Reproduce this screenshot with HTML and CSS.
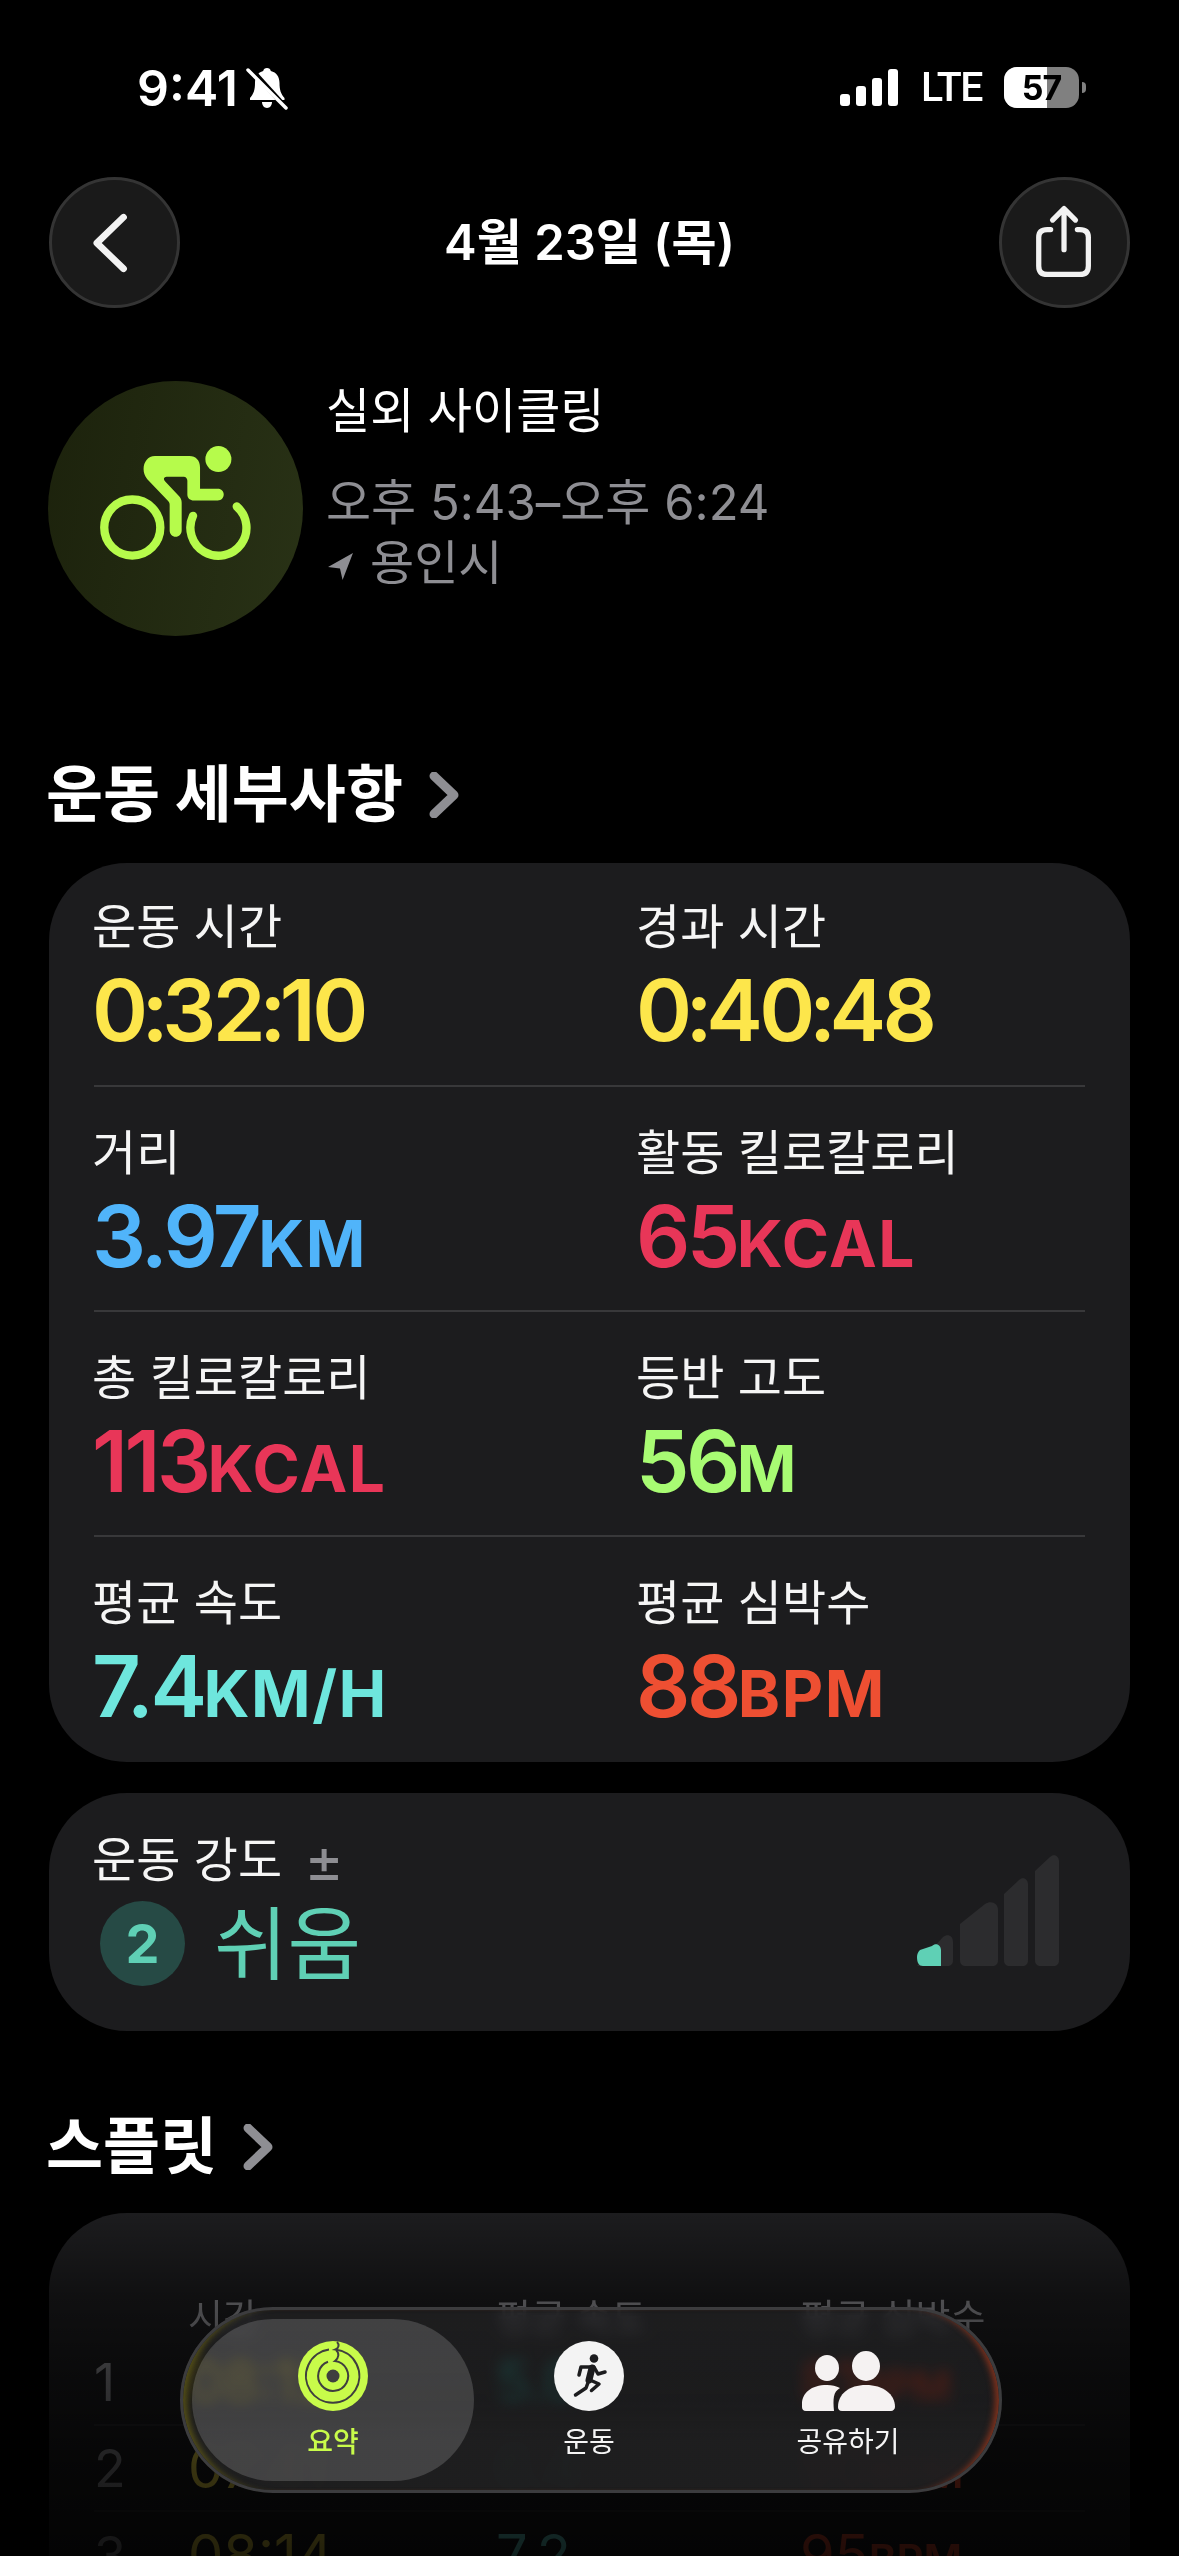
FILE: index.html
```html
<!DOCTYPE html>
<html lang="ko">
<head>
<meta charset="utf-8">
<title>운동 요약</title>
<link rel="stylesheet" href="styles.css">
</head>
<body>
<div class="page">
  <header class="status">
    <div class="status-left">
      <span class="clock">9:41</span>
      <svg class="bell" viewBox="0 0 44 44" aria-hidden="true">
        <path class="bell-shape" d="M21 2c2 0 3.500 1.300 3.800 3.100C30.500 6.500 33.500 11 33.500 17c0 7 1.500 11 5 15v2H4v-2c3.500-4 5-8 5-15 0-6 3-10.500 8.200-11.900C17.500 3.300 19 2 21 2z"/>
        <path class="bell-shape" d="M16 36h10c0 3-2 6-5 6s-5-3-5-6z"/>
        <path class="bell-cut" d="M4 2 42 44"/>
        <path class="bell-slash" d="M2 4 40 42"/>
      </svg>
    </div>
    <div class="status-right">
      <svg class="signal" viewBox="0 0 58 37" aria-hidden="true">
        <rect x="0" y="25" width="10" height="12" rx="3"/>
        <rect x="16" y="17" width="10" height="20" rx="3"/>
        <rect x="32" y="9" width="10" height="28" rx="3"/>
        <rect x="48" y="0" width="10" height="37" rx="3"/>
      </svg>
      <span class="lte">LTE</span>
      <div class="battery"><div class="battery-fill"></div><span class="battery-num">57</span></div>
      <span class="battery-nub"></span>
    </div>
  </header>

  <nav class="nav">
    <button class="round-btn" aria-label="뒤로">
      <svg viewBox="0 0 131 131" aria-hidden="true"><path class="line-icon" d="M75 39 47 66l28 27"/></svg>
    </button>
    <h1 class="date">4월 23일 (목)</h1>
    <button class="round-btn" aria-label="공유">
      <svg viewBox="0 0 131 131" aria-hidden="true">
        <path class="share-icon" d="M51 52H47.500C41 52 38.500 55 38.500 60v30c0 6 3 9 9 9h34c6 0 9-3 9-9V60c0-5-2.500-8-9-8H79"/>
        <path class="share-icon" d="M65 73V32M53 42l12-12 12 12"/>
      </svg>
    </button>
  </nav>

  <section class="workout">
    <div class="bike-badge">
      <svg viewBox="55 33 763 764" aria-hidden="true">
        <circle class="bike-fill" cx="565" cy="267" r="39"/>
        <path class="bike-fill" d="M375 258H478C498 258 510 272 510 292V356H563C574 356 581 364 581 373S574 391 563 391H492C480 391 472 384 472 373V332C472 325 468 320 461 320H410C402 320 399 327 405 333L446 377C452 383 455 390 455 398V481C455 492 447 500 437 500S419 492 419 481V404C419 398 417 395 413 391L352 327C330 302 342 258 375 258Z"/>
        <circle class="bike-wheel" cx="307" cy="472" r="84"/>
        <path class="bike-wheel" d="M489 437A84 84 0 1 0 620 409"/>
      </svg>
    </div>
    <div class="workout-text">
      <div class="workout-name">실외 사이클링</div>
      <div class="workout-time">오후 5:43–오후 6:24</div>
      <div class="workout-place">
        <svg class="loc" viewBox="0 0 24 26" aria-hidden="true"><path d="M24 0 14 26 11.500 15 0 13.500z"/></svg>
        <span>용인시</span>
      </div>
    </div>
  </section>

  <h2 class="section-head section-first">운동 세부사항
    <svg class="head-chevron" viewBox="0 0 30 46" aria-hidden="true"><path d="M5 4 25 23 5 42"/></svg>
  </h2>

  <section class="card metrics">
    <div class="metric-row">
      <div class="metric"><div class="metric-label">운동 시간</div><div class="metric-value yellow">0<span class="colon">:</span>32<span class="colon">:</span>10</div></div>
      <div class="metric"><div class="metric-label">경과 시간</div><div class="metric-value yellow">0<span class="colon">:</span>40<span class="colon">:</span>48</div></div>
    </div>
    <div class="metric-row">
      <div class="metric"><div class="metric-label">거리</div><div class="metric-value blue">3.97<span class="unit">KM</span></div></div>
      <div class="metric"><div class="metric-label">활동 킬로칼로리</div><div class="metric-value pink">65<span class="unit">KCAL</span></div></div>
    </div>
    <div class="metric-row">
      <div class="metric"><div class="metric-label">총 킬로칼로리</div><div class="metric-value pink">113<span class="unit">KCAL</span></div></div>
      <div class="metric"><div class="metric-label">등반 고도</div><div class="metric-value green">56<span class="unit">M</span></div></div>
    </div>
    <div class="metric-row">
      <div class="metric"><div class="metric-label">평균 속도</div><div class="metric-value cyan">7.4<span class="unit">KM/H</span></div></div>
      <div class="metric"><div class="metric-label">평균 심박수</div><div class="metric-value red">88<span class="unit">BPM</span></div></div>
    </div>
  </section>

  <section class="card effort">
    <div class="effort-left">
      <div class="metric-label effort-label">운동 강도<span class="plusminus">±</span></div>
      <div class="effort-main">
        <span class="effort-badge">2</span>
        <span class="effort-word">쉬움</span>
      </div>
    </div>
    <svg class="effort-bars" viewBox="918 1850 145 118" aria-hidden="true">
      <path class="bar" d="M1037 1872 1052 1858C1056 1854 1061 1857 1061 1862V1961C1061 1965 1059 1967 1055 1967H1043C1039 1967 1037 1965 1037 1961Z"/>
      <path class="bar" d="M1006 1895 1021 1881C1025 1877 1030 1880 1030 1885V1961C1030 1965 1028 1967 1024 1967H1012C1008 1967 1006 1965 1006 1961Z"/>
      <path class="bar" d="M962 1925 987 1905C993 1901 1000 1904 1000 1911V1961C1000 1965 998 1967 994 1967H968C964 1967 962 1965 962 1961Z"/>
      <path class="bar" d="M919 1967 945 1938C950 1934 955 1937 955 1943V1961C955 1965 953 1967 949 1967Z"/>
      <path class="bar-on" d="M919 1958C919 1955 920 1953 922 1951L934 1947C938 1943 943 1946 943 1951V1967H925C921 1967 919 1964 919 1958Z"/>
    </svg>
  </section>

  <h2 class="section-head section-second">스플릿
    <svg class="head-chevron" viewBox="0 0 30 46" aria-hidden="true"><path d="M5 4 25 23 5 42"/></svg>
  </h2>

  <section class="card splits">
    <div class="split-head">
      <span></span><span>시간</span><span>평균 속도</span><span>평균 심박수</span>
    </div>
    <div class="split-row">
      <span class="split-idx">1</span><span class="yellow">08:12</span><span class="cyan">5.0</span><span class="red">81<small>BPM</small></span>
    </div>
    <div class="split-row">
      <span class="split-idx">2</span><span class="yellow">07:41</span><span class="cyan">6.4</span><span class="red">90<small>BPM</small></span>
    </div>
    <div class="split-row">
      <span class="split-idx">3</span><span class="yellow">08:14</span><span class="cyan">7.2</span><span class="red">95<small>BPM</small></span>
    </div>
  </section>

  <div class="fade"></div>

  <nav class="tabbar">
    <div class="tab tab-active">
      <svg class="tab-icon" viewBox="0 0 70 70" aria-hidden="true">
        <circle class="ring-fill" cx="35" cy="35" r="35"/>
        <path class="ring-line" d="M39 1C41.500 3.500 41 7 37.500 8.500A26.700 26.700 0 1 1 31 8.600"/>
        <path class="ring-line" d="M38 9C41.500 12 41 17 37 20A15 15 0 1 1 30 20.800"/>
        <circle class="ring-hole" cx="35" cy="35" r="6.500"/>
      </svg>
      <span class="tab-label tab-label-on">요약</span>
    </div>
    <div class="tab">
      <svg class="tab-icon" viewBox="0 0 70 70" aria-hidden="true">
        <circle class="run-disc" cx="35" cy="35" r="35"/>
        <circle class="run-head" cx="40" cy="17.500" r="4.300"/>
        <path class="run-thin" d="M25 34 27 26H40L44 33 51 31"/>
        <path class="run-body" d="M38 27 35 39"/>
        <path class="run-thin" d="M35 39 32 47 21.500 54M36 39 45 43 37.500 49.500"/>
      </svg>
      <span class="tab-label">운동</span>
    </div>
    <div class="tab">
      <svg class="tab-icon" viewBox="0 0 93 70" aria-hidden="true">
        <ellipse class="people" cx="25" cy="27" rx="12" ry="13"/>
        <ellipse class="people" cx="64" cy="25" rx="14" ry="15"/>
        <path class="people" d="M0 63C0 52 9 44 25 44 30 44 34 45 38 47 31 51 31 58 32 70H4C1 70 0 68 0 66Z"/>
        <path class="people" d="M36 66C36 53 47 44 64 44S93 53 93 66C93 68 91 70 89 70H40C37 70 36 68 36 66Z"/>
      </svg>
      <span class="tab-label">공유하기</span>
    </div>
  </nav>
</div>
</body>
</html>
```

FILE: styles.css
```css
* { box-sizing: border-box; }
html, body { margin: 0; background: #000; }
body { font-family: "Inter", "Noto Sans CJK KR", sans-serif; color: #fff; }

.page { position: relative; width: 1179px; height: 2556px; overflow: hidden; background: #000; }

/* status bar */
.status { height: 177px; display: flex; justify-content: space-between; padding: 66px 93px 0 137px; align-items: flex-start; }
.status-left { display: flex; align-items: center; gap: 8px; height: 44px; }
.clock { font-size: 50px; font-weight: 600; line-height: 44px; }
.bell { width: 44px; height: 44px; }
.bell-shape { fill: #fff; }
.bell-cut { stroke: #000; stroke-width: 5; fill: none; }
.bell-slash { stroke: #fff; stroke-width: 3.500; fill: none; stroke-linecap: round; }
.status-right { display: flex; align-items: center; height: 42px; }
.signal { width: 58px; height: 37px; fill: #fff; margin-right: 23px; }
.lte { font-family: "Roboto", sans-serif; font-size: 41px; font-weight: 500; letter-spacing: -1.500px; width: 83px; line-height: 42px; }
.battery { position: relative; width: 75px; height: 41px; border-radius: 13px; background: #808080; overflow: hidden; }
.battery-fill { width: 57%; height: 100%; background: #fff; }
.battery-num { position: absolute; left: 0; right: 0; top: 0; text-align: center; color: #000; font-size: 34px; font-weight: 700; line-height: 41px; letter-spacing: -1px; }
.battery-nub { width: 4px; height: 11px; margin-left: 3px; background: #808080; border-radius: 0 4px 4px 0; }

/* navigation */
.nav { height: 131px; padding: 0 49px; display: flex; align-items: center; justify-content: space-between; }
.round-btn { width: 131px; height: 131px; padding: 0; border-radius: 50%; background: #1a1a1a; border: 3px solid #343434; }
.round-btn svg { display: block; width: 125px; height: 125px; }
.line-icon { fill: none; stroke: #f2f2f2; stroke-width: 7; stroke-linecap: round; stroke-linejoin: round; }
.share-icon { fill: none; stroke: #f2f2f2; stroke-width: 5.500; stroke-linecap: round; stroke-linejoin: round; }
.date { margin: 0; font-size: 49px; font-weight: 600; line-height: 60px; }

/* workout header */
.workout { margin-top: 73px; padding-left: 48px; display: flex; gap: 23px; }
.bike-badge { width: 255px; height: 255px; border-radius: 50%; background: linear-gradient(100deg, #1c220c, #293216); }
.bike-badge svg { display: block; width: 255px; height: 255px; }
.bike-fill { fill: #b6fb4b; }
.bike-wheel { fill: none; stroke: #b6fb4b; stroke-width: 25; stroke-linecap: round; }
.workout-name { font-size: 48px; line-height: 60px; margin-bottom: 32px; }
.workout-time { font-size: 49px; line-height: 60px; color: #8e8e93; }
.workout-place { display: flex; align-items: center; font-size: 48px; line-height: 60px; color: #8e8e93; }
.loc { width: 25px; height: 27px; margin-right: 17px; margin-left: 2px; margin-top: 6px; fill: #8e8e93; }

/* section headings */
.section-head { margin: 0; padding-left: 46px; height: 72px; display: flex; align-items: center; gap: 26px; font-size: 62px; font-weight: 700; line-height: 72px; }
.section-first { margin-top: 123px; margin-bottom: 32px; }
.section-second { margin-top: 80px; margin-bottom: 30px; }
.head-chevron { width: 30px; height: 46px; fill: none; stroke: #8e8e93; stroke-width: 9; stroke-linecap: round; stroke-linejoin: round; }

/* cards */
.card { margin: 0 49px; background: #1c1c1e; border-radius: 78px; }
.metrics { height: 899px; padding: 0 45px; }
.metric-row { height: 225px; padding-top: 36px; display: grid; grid-template-columns: 544px 1fr; border-bottom: 2px solid #38383a; }
.metric-row:first-child { height: 224px; padding-top: 34px; }
.metric-row:last-child { border-bottom: 0; }
.metric { margin-left: -2px; }
.metric-label { font-size: 48px; line-height: 60px; color: #f5f5f5; }
.metric-value { font-size: 85px; font-weight: 600; line-height: 107px; letter-spacing: -3.500px; }
.colon { margin: 0 -3px; }
.unit { font-size: 64px; font-weight: 700; letter-spacing: 1.500px; }
.yellow { color: #fde64b; }
.blue { color: #50b4fa; }
.pink { color: #e83658; }
.green { color: #a8fb73; }
.cyan { color: #6ee6dd; }
.red { color: #ee4f32; }

/* effort */
.effort { height: 238px; margin-top: 31px; padding: 37px 69px 45px 43px; display: flex; justify-content: space-between; align-items: flex-end; }
.effort-label { display: flex; align-items: center; height: 60px; }
.plusminus { margin-left: 22px; color: #8e8e93; font-size: 60px; line-height: 60px; }
.effort-main { display: flex; align-items: center; gap: 29px; margin: 11px 0 0 8px; }
.effort-badge { width: 85px; height: 85px; border-radius: 50%; background: #264a45; color: #5fd0b5; font-size: 54px; font-weight: 700; display: flex; align-items: center; justify-content: center; }
.effort-word { font-size: 80px; line-height: 85px; font-weight: 400; color: #5fd0b5; }
.effort-bars { width: 145px; height: 118px; margin-bottom: 19px; }
.bar { fill: #2c2c2e; }
.bar-on { fill: #5fd0b5; }

/* splits */
.splits { height: 420px; padding: 81px 45px 0; }
.split-head, .split-row { display: grid; grid-template-columns: 94px 308px 304px 1fr; }
.split-head { height: 46px; font-size: 38px; line-height: 46px; color: #8e8e93; }
.split-row { height: 86px; align-items: center; font-size: 56px; font-weight: 400; border-bottom: 2px solid #2a2a2c; }
.split-row:last-child { border-bottom: 0; }
.split-idx { color: #8e8e93; font-weight: 400; font-size: 52px; }
.split-row small { font-size: 42px; font-weight: 600; }

.fade { position: absolute; left: 0; right: 0; top: 2213px; bottom: 0; background: linear-gradient(180deg, rgba(0,0,0,0) 0, rgba(0,0,0,.45) 87px, rgba(0,0,0,.65) 170px, rgba(0,0,0,.78) 257px, rgba(0,0,0,.86) 100%); }

/* tab bar */
.tabbar { position: absolute; left: 180px; top: 2307px; width: 822px; height: 186px; padding: 9px; border-radius: 93px; display: grid; grid-template-columns: 282px 230px 288px; background: linear-gradient(180deg, rgba(31,31,32,.74) 0, rgba(31,31,32,.76) 50%, rgba(31,31,32,.96) 72%); -webkit-backdrop-filter: blur(7px) brightness(1.7) saturate(2); backdrop-filter: blur(7px) brightness(1.7) saturate(2); border: 3px solid #3c3c3e; box-shadow: inset 9px 0 6px -5px rgba(130,120,20,.55), inset -9px 0 6px -5px rgba(170,60,30,.7); }
.tab { height: 162px; padding-top: 22px; border-radius: 81px; display: flex; flex-direction: column; align-items: center; }
.tab-active { background: rgba(255,255,255,.16); }
.tab-icon { height: 70px; }
.tab-label { margin-top: 13px; font-size: 28px; line-height: 36px; color: #f5f5f5; }
.tab-label-on { color: #c8fb4a; font-weight: 500; }
.ring-fill { fill: #c8fb4a; }
.ring-line { fill: none; stroke: #3f3f3f; stroke-width: 2; }
.ring-hole { fill: #3f3f3f; }
.run-disc { fill: #f3f3f3; }
.run-head { fill: #1c1c1e; }
.run-thin { fill: none; stroke: #1c1c1e; stroke-width: 3.500; stroke-linecap: round; stroke-linejoin: round; }
.run-body { fill: none; stroke: #1c1c1e; stroke-width: 7; stroke-linecap: round; }
.people { fill: #f5f2f2; }
```
